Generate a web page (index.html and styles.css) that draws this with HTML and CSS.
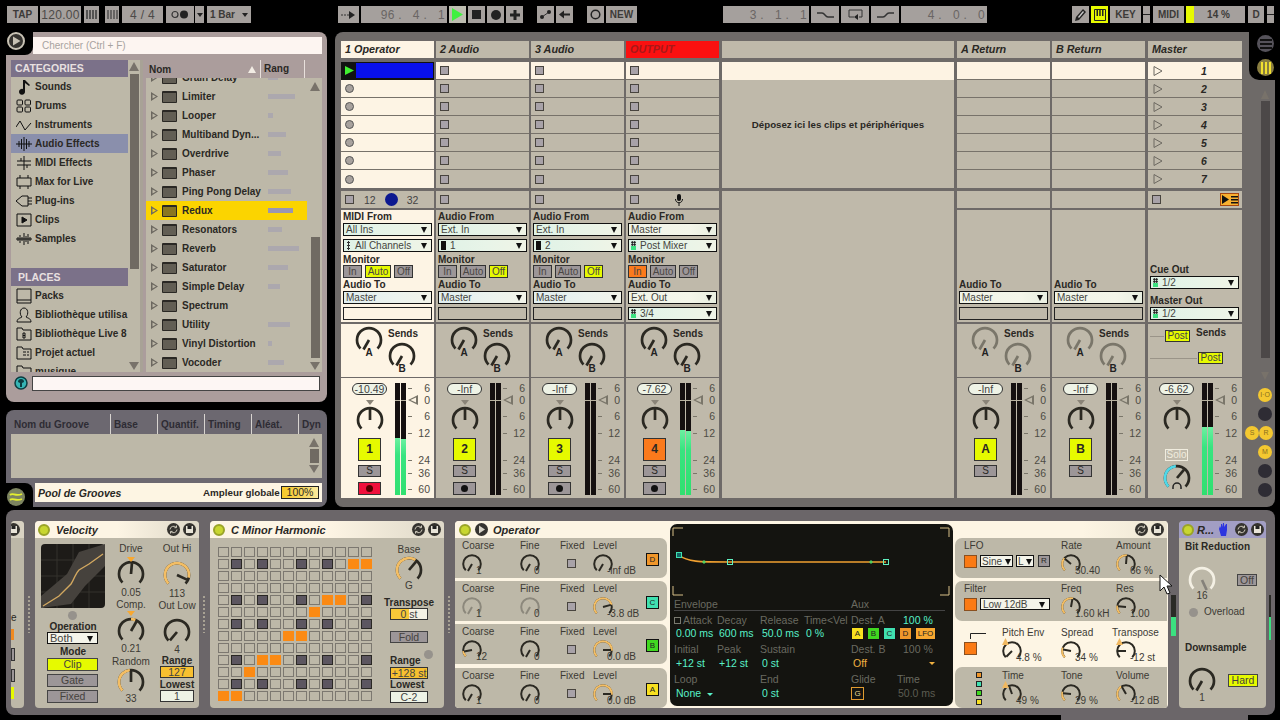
FILE: index.html
```html
<!DOCTYPE html>
<html lang="fr">
<head>
    <meta charset="UTF-8">
    <title>Live 8</title>
    <link rel="stylesheet" href="styles.css">
</head>
<body>
<svg class="defs" width="0" height="0">
    <defs>
        <path id="ring" pathLength="100" fill="none" stroke-width="2.7" d="M6.5 23.5A12 12 0 1 1 23.5 23.5"/>
        <line id="nd" x1="15" y1="15" x2="15" y2="4" stroke-width="2.7"/>
        <g id="swap" fill="none" stroke="#cfcabc" stroke-width="1"><path d="M3 6.5a3.5 3.5 0 0 1 6-2.2M10 6.5a3.5 3.5 0 0 1-6 2.2"/><path d="M9.5 2.5v2.2H7.4M3.5 10.5V8.4h2.1"/></g>
        <g id="save"><path fill="#e8e4d8" d="M3 3h7v7H3z"/><path fill="#222" d="M4.5 3h4v3h-4z"/></g>
    </defs>
</svg>

<div class="top">
    <div class="tb w31">TAP</div>
    <div class="tb w41 big">120.00</div>
    <div class="tb w15 m1"><svg width="11" height="9"><path stroke="#333" stroke-width="1.4" d="M1 0v9M4 0v9M7 0v9M10 0v9"/></svg></div>
    <div class="tb w14 m4"><svg width="11" height="9"><path stroke="#333" stroke-width="1.1" d="M1 0v9M4 0v9M7 0v9M10 0v9"/></svg></div>
    <div class="tb w41 m1 big">4 / 4</div>
    <div class="tb w28 m1"><svg width="18" height="9"><circle cx="4" cy="4.5" r="3" fill="none" stroke="#333" stroke-width="1.2"/><circle cx="13" cy="4.5" r="4" fill="#222"/></svg></div>
    <div class="tb w9 mn1"><i class="dn"></i></div>
    <div class="tb w44 m1">1 Bar <i class="dn sp"></i></div>

    <div class="tb w21 m85"><svg width="15" height="8"><path stroke="#333" stroke-dasharray="2 1" d="M0 4h8"/><path fill="#222" d="M8 0l6 4-6 4z"/></svg></div>
    <div class="tb w86 big dim pos">96 .&nbsp;&nbsp;&nbsp;4 .&nbsp;&nbsp;&nbsp;1</div>
    <div class="tb w17 play"><svg width="11" height="13"><path fill="#40f040" d="M0 0l11 6.500-11 6.500z"/></svg></div>
    <div class="tb w17"><svg width="9" height="9"><path fill="#222" d="M0 0h9v9H0z"/></svg></div>
    <div class="tb w17"><svg width="10" height="10"><circle cx="5" cy="5" r="5" fill="#222"/></svg></div>
    <div class="tb w17"><svg width="10" height="10"><path fill="#222" d="M3.500 0h3v3.500H10v3H6.500V10h-3V6.500H0v-3h3.500z"/></svg></div>
    <div class="tb w17 m12"><svg width="11" height="9"><path stroke="#333" d="M2 7l7-5"/><circle cx="2" cy="7" r="2" fill="#222"/><circle cx="9" cy="2" r="2" fill="#222"/></svg></div>
    <div class="tb w17"><svg width="11" height="9"><path fill="#222" d="M0 4.500l5-4v3h6v2H5v3z"/></svg></div>
    <div class="tb w17 m12"><svg width="11" height="11"><circle cx="5.500" cy="5.500" r="4.300" fill="none" stroke="#222" stroke-width="1.500"/></svg></div>
    <div class="tb w31">NEW</div>

    <div class="tb w86 big dim m84 pos">3 .&nbsp;&nbsp;&nbsp;1 .&nbsp;&nbsp;&nbsp;1</div>
    <div class="tb w28"><svg width="17" height="8"><path fill="none" stroke="#333" stroke-width="1.400" d="M0 2h5c3 0 3 4 6 4h6"/></svg></div>
    <div class="tb w28"><svg width="15" height="12"><path fill="none" stroke="#333" d="M11 8h3V1H1v7h5"/><path fill="#222" d="M10 5v6l-4-3z"/></svg></div>
    <div class="tb w28"><svg width="17" height="8"><path fill="none" stroke="#333" stroke-width="1.400" d="M0 6h6c3 0 3-4 6-4h5"/></svg></div>
    <div class="tb w86 big dim pos">4 .&nbsp;&nbsp;&nbsp;0 .&nbsp;&nbsp;&nbsp;0</div>

    <div class="tb w17 m83"><svg width="11" height="12"><path fill="#222" d="M8 0l3 3-7 8-4 1 1-4z"/><path fill="#ccc" d="M8 2l1 1-5 6-1-1z"/></svg></div>
    <div class="tb w17 lit"><svg width="12" height="12"><path fill="none" stroke="#222" d="M.5.5h11v11H.5z"/><path fill="#222" d="M2.500 0h1.500v7H2.500zM5.200 0h1.500v7H5.200zM8 0h1.500v7H8z"/></svg></div>
    <div class="tb w31">KEY</div>
    <div class="tb w7 split"></div>
    <div class="tb w31 m1">MIDI</div>
    <div class="tb w59 cpu m0">14 %</div>
    <div class="tb w16 m1">D</div>
    <div class="tb w7 split m1"></div>
</div>

<div class="mid">
    <div class="left">
        <div class="browser">
            <div class="cut-tl"><svg width="18" height="18"><circle cx="9" cy="9" r="8" fill="#35332f" stroke="#c8c2b4" stroke-width="2"/><path fill="#c8c2b4" d="M6 4.500l7.500 4.500L6 13.500z"/></svg></div>
            <div class="search">Chercher (Ctrl + F)</div>
            <div class="b-body">
                <div class="cats">
                    <div class="cat-h">CATEGORIES</div>
                    <div class="cat"><svg viewBox="0 0 16 16"><path fill="#111" d="M7 1h2l5 5-1 1-4-3v8.500a3 3 0 1 1-2-2.500z"/></svg>Sounds</div>
                    <div class="cat"><svg viewBox="0 0 16 16" class="ln"><rect x="1" y="2" width="5.500" height="5" rx="1"/><rect x="9" y="2" width="5.500" height="5" rx="1"/><rect x="1" y="9" width="5.500" height="5" rx="1"/><rect x="9" y="9" width="5.500" height="5" rx="1"/></svg>Drums</div>
                    <div class="cat"><svg viewBox="0 0 16 16" class="ln"><path d="M0 10L4 4l5 9 6-7"/></svg>Instruments</div>
                    <div class="cat on"><svg viewBox="0 0 16 16" class="ln"><path d="M0 8h16M3 5v6M5.500 3v10M8 1v14M10.500 3v10M13 5v6"/></svg>Audio Effects</div>
                    <div class="cat"><svg viewBox="0 0 16 16" class="ln"><path d="M1 6h14M1 10h14M8 1v14M5 3v3M11 10v3"/></svg>MIDI Effects</div>
                    <div class="cat"><svg viewBox="0 0 16 16" class="ln"><path d="M1 4h14v8H1zM4 1v3M12 1v3M4 12v3M12 12v3"/></svg>Max for Live</div>
                    <div class="cat"><svg viewBox="0 0 16 16" class="ln"><path d="M0 8l6-5h6v10H6zM12 5h4M12 8h4M12 11h4"/></svg>Plug-ins</div>
                    <div class="cat"><svg viewBox="0 0 16 16" class="ln"><path d="M1 2h14v12H1z"/><path fill="#111" d="M6 5l5 3-5 3z"/></svg>Clips</div>
                    <div class="cat"><svg viewBox="0 0 16 16" class="ln"><path d="M0 8h16M2 6v4M4 4v8M6 6v4M8 2v12M10 5v6M12 3v10M14 6v4"/></svg>Samples</div>
                    <div class="cat-h places">PLACES</div>
                    <div class="cat"><svg viewBox="0 0 16 16" class="ln"><path d="M1 1h14v14H1zM1 12h14"/></svg>Packs</div>
                    <div class="cat"><svg viewBox="0 0 16 16" class="ln"><path d="M1 15c0-4 4-4 5-5-3-3-2-9 2-9s5 6 2 9c1 1 5 1 5 5z"/></svg>Bibliothèque utilisa</div>
                    <div class="cat"><svg viewBox="0 0 16 16" class="ln"><path d="M1 14V2h5l1 2h8v10z"/><path d="M7 7h2v5H7zM7 9.500h2"/></svg>Bibliothèque Live 8</div>
                    <div class="cat"><svg viewBox="0 0 16 16" class="ln"><path d="M1 14V2h5l1 2h8v10zM7 7h3M11 7h2M7 10h3M11 10h2"/></svg>Projet actuel</div>
                    <div class="cat"><svg viewBox="0 0 16 16" class="ln"><path d="M1 14V2h5l1 2h8v10z"/></svg>musique</div>
                </div>
                <div class="c-scroll">
                    <i class="t-up"></i>
                    <i class="thumb c-thumb"></i>
                    <i class="t-dn c-dn"></i>
                </div>
                <div class="files">
                    <div class="f-head"><span class="f-nom">Nom</span><i class="f-sort"></i><span class="f-rang">Rang</span></div>
                    <div class="f-list">
                        <div class="rows">
                            <div class="row"><i class="ftri"></i><i class="folder"></i><span class="fname">Grain Delay</span><i class="rank" style="width:10px"></i></div>
                            <div class="row"><i class="ftri"></i><i class="folder"></i><span class="fname">Limiter</span><i class="rank" style="width:27px"></i></div>
                            <div class="row"><i class="ftri"></i><i class="folder"></i><span class="fname">Looper</span><i class="rank" style="width:5px"></i></div>
                            <div class="row"><i class="ftri"></i><i class="folder"></i><span class="fname">Multiband Dyn...</span><i class="rank" style="width:18px"></i></div>
                            <div class="row"><i class="ftri"></i><i class="folder"></i><span class="fname">Overdrive</span><i class="rank" style="width:13px"></i></div>
                            <div class="row"><i class="ftri"></i><i class="folder"></i><span class="fname">Phaser</span><i class="rank" style="width:20px"></i></div>
                            <div class="row"><i class="ftri"></i><i class="folder"></i><span class="fname">Ping Pong Delay</span><i class="rank" style="width:23px"></i></div>
                            <div class="row hot"><i class="ftri"></i><i class="folder"></i><span class="fname">Redux</span><i class="rank" style="width:25px"></i></div>
                            <div class="row"><i class="ftri"></i><i class="folder"></i><span class="fname">Resonators</span><i class="rank" style="width:14px"></i></div>
                            <div class="row"><i class="ftri"></i><i class="folder"></i><span class="fname">Reverb</span><i class="rank" style="width:31px"></i></div>
                            <div class="row"><i class="ftri"></i><i class="folder"></i><span class="fname">Saturator</span><i class="rank" style="width:20px"></i></div>
                            <div class="row"><i class="ftri"></i><i class="folder"></i><span class="fname">Simple Delay</span><i class="rank" style="width:12px"></i></div>
                            <div class="row"><i class="ftri"></i><i class="folder"></i><span class="fname">Spectrum</span></div>
                            <div class="row"><i class="ftri"></i><i class="folder"></i><span class="fname">Utility</span><i class="rank" style="width:22px"></i></div>
                            <div class="row"><i class="ftri"></i><i class="folder"></i><span class="fname">Vinyl Distortion</span><i class="rank" style="width:4px"></i></div>
                            <div class="row"><i class="ftri"></i><i class="folder"></i><span class="fname">Vocoder</span><i class="rank" style="width:16px"></i></div>
                        </div>
                        <div class="f-scroll">
                            <i class="t-up"></i>
                            <i class="thumb f-thumb"></i>
                            <i class="t-dn"></i>
                        </div>
                    </div>
                </div>
            </div>
            <div class="b-foot">
                <svg width="14" height="14"><circle cx="7" cy="7" r="6" fill="#35b5b5" stroke="#0c3c40" stroke-width="1.500"/><path fill="#0c3c40" d="M4 6a3 3 0 0 1 6 0L8 7v4H6V7z"/></svg>
                <div class="b-input"></div>
            </div>
        </div>

        <div class="groove">
            <div class="g-head">
                <span class="g-first">Nom du Groove</span><span>Base</span><span>Quantif.</span><span>Timing</span><span>Aléat.</span><span>Dyn</span>
            </div>
            <div class="g-list">
                <i class="t-up"></i>
                <i class="thumb g-thumb"></i>
                <i class="t-dn"></i>
            </div>
            <div class="g-title">
                <b class="g-name">Pool de Grooves</b>
                <b class="g-amp">Ampleur globale</b>
                <span class="g-pct">100%</span>
            </div>
            <div class="cut-bl"><svg width="18" height="18"><circle cx="9" cy="9" r="9" fill="#7d8460"/><path fill="none" stroke="#e4ee30" stroke-width="1.800" d="M3 7c3-3 5 2 12-1M3 12c3-3 5 2 12-1"/></svg></div>
        </div>
    </div>

    <div class="session">
        <div class="track sel">
            <div class="t-title">1 Operator</div>
            <div class="slots">
                <div class="slot clip"><i class="clip-play"><svg width="9" height="9"><path fill="#40f030" d="M0 0l9 4.500-9 4.500z"/></svg></i><i class="clip-blue"></i></div>
                <div class="slot"><i class="rec-o"></i></div>
                <div class="slot"><i class="rec-o"></i></div>
                <div class="slot"><i class="rec-o"></i></div>
                <div class="slot"><i class="rec-o"></i></div>
                <div class="slot"><i class="rec-o"></i></div>
                <div class="slot"><i class="rec-o"></i></div>
            </div>
            <div class="st gry"><i class="stop"></i><span class="st-a">12</span><i class="st-dot"></i><span class="st-b">32</span></div>
            <div class="io">
                <b class="lb">MIDI From</b>
                <div class="dd mint">All Ins</div>
                <div class="dd mint gap"><i class="ch ch-dots"></i>All Channels</div>
                <b class="lb lb-m">Monitor</b>
                <div class="mon"><span class="mb">In</span><span class="mb yes">Auto</span><span class="mb">Off</span></div>
                <b class="lb">Audio To</b>
                <div class="dd blue">Master</div>
                <div class="blank"></div>
            </div>
            <div class="sends">
                <svg class="ksend" viewBox="0 0 30 34"><use href="#ring"/><use href="#nd" transform="rotate(-150 15 15)"/><text x="15" y="31">A</text></svg>
                <div class="send-b"><b class="s-lb">Sends</b><svg class="ksend" viewBox="0 0 30 34"><use href="#ring"/><use href="#nd" transform="rotate(-150 15 15)"/><text x="15" y="31">B</text></svg></div>
            </div>
            <div class="mix">
                <div class="strip">
                    <span class="pill">-10.49</span><i class="pan-t"></i>
                    <svg class="k" viewBox="0 0 30 27"><use href="#ring"/><use href="#nd"/></svg>
                    <span class="tnum">1</span><span class="tsolo">S</span><span class="tarm hot"><i></i></span>
                </div>
                <div class="meter"><i><u style="height:57px"></u></i><i><u style="height:56px"></u></i></div>
                <div class="scale"><span>6</span><span class="zero">0</span><span>6</span><span>12</span><span>24</span><span>36</span><span>60</span></div>
            </div>
        </div>

        <div class="track">
            <div class="t-title">2 Audio</div>
            <div class="slots">
                <div class="slot cr"><i class="stop"></i></div>
                <div class="slot"><i class="stop"></i></div>
                <div class="slot"><i class="stop"></i></div>
                <div class="slot"><i class="stop"></i></div>
                <div class="slot"><i class="stop"></i></div>
                <div class="slot"><i class="stop"></i></div>
                <div class="slot"><i class="stop"></i></div>
            </div>
            <div class="st"><i class="stop"></i></div>
            <div class="io">
                <b class="lb">Audio From</b>
                <div class="dd mint">Ext. In</div>
                <div class="dd mint gap"><i class="ch ch-bar"></i>1</div>
                <b class="lb lb-m">Monitor</b>
                <div class="mon"><span class="mb">In</span><span class="mb">Auto</span><span class="mb yes">Off</span></div>
                <b class="lb">Audio To</b>
                <div class="dd blue">Master</div>
                <div class="blank"></div>
            </div>
            <div class="sends">
                <svg class="ksend" viewBox="0 0 30 34"><use href="#ring"/><use href="#nd" transform="rotate(-150 15 15)"/><text x="15" y="31">A</text></svg>
                <div class="send-b"><b class="s-lb">Sends</b><svg class="ksend" viewBox="0 0 30 34"><use href="#ring"/><use href="#nd" transform="rotate(-150 15 15)"/><text x="15" y="31">B</text></svg></div>
            </div>
            <div class="mix">
                <div class="strip">
                    <span class="pill">-Inf</span><i class="pan-t"></i>
                    <svg class="k" viewBox="0 0 30 27"><use href="#ring"/><use href="#nd"/></svg>
                    <span class="tnum">2</span><span class="tsolo">S</span><span class="tarm"><i></i></span>
                </div>
                <div class="meter"><i></i><i></i></div>
                <div class="scale"><span>6</span><span class="zero">0</span><span>6</span><span>12</span><span>24</span><span>36</span><span>60</span></div>
            </div>
        </div>

        <div class="track">
            <div class="t-title">3 Audio</div>
            <div class="slots">
                <div class="slot cr"><i class="stop"></i></div>
                <div class="slot"><i class="stop"></i></div>
                <div class="slot"><i class="stop"></i></div>
                <div class="slot"><i class="stop"></i></div>
                <div class="slot"><i class="stop"></i></div>
                <div class="slot"><i class="stop"></i></div>
                <div class="slot"><i class="stop"></i></div>
            </div>
            <div class="st"><i class="stop"></i></div>
            <div class="io">
                <b class="lb">Audio From</b>
                <div class="dd mint">Ext. In</div>
                <div class="dd mint gap"><i class="ch ch-bar"></i>2</div>
                <b class="lb lb-m">Monitor</b>
                <div class="mon"><span class="mb">In</span><span class="mb">Auto</span><span class="mb yes">Off</span></div>
                <b class="lb">Audio To</b>
                <div class="dd blue">Master</div>
                <div class="blank"></div>
            </div>
            <div class="sends">
                <svg class="ksend" viewBox="0 0 30 34"><use href="#ring"/><use href="#nd" transform="rotate(-150 15 15)"/><text x="15" y="31">A</text></svg>
                <div class="send-b"><b class="s-lb">Sends</b><svg class="ksend" viewBox="0 0 30 34"><use href="#ring"/><use href="#nd" transform="rotate(-150 15 15)"/><text x="15" y="31">B</text></svg></div>
            </div>
            <div class="mix">
                <div class="strip">
                    <span class="pill">-Inf</span><i class="pan-t"></i>
                    <svg class="k" viewBox="0 0 30 27"><use href="#ring"/><use href="#nd"/></svg>
                    <span class="tnum">3</span><span class="tsolo">S</span><span class="tarm"><i></i></span>
                </div>
                <div class="meter"><i></i><i></i></div>
                <div class="scale"><span>6</span><span class="zero">0</span><span>6</span><span>12</span><span>24</span><span>36</span><span>60</span></div>
            </div>
        </div>

        <div class="track">
            <div class="t-title red">OUTPUT</div>
            <div class="slots">
                <div class="slot cr"><i class="stop"></i></div>
                <div class="slot"><i class="stop"></i></div>
                <div class="slot"><i class="stop"></i></div>
                <div class="slot"><i class="stop"></i></div>
                <div class="slot"><i class="stop"></i></div>
                <div class="slot"><i class="stop"></i></div>
                <div class="slot"><i class="stop"></i></div>
            </div>
            <div class="st"><i class="stop"></i><svg class="mic" width="8" height="12"><rect x="2" y="0" width="4" height="7" rx="2" fill="#111"/><path fill="none" stroke="#111" d="M.5 5c0 5 7 5 7 0M4 9v3"/></svg></div>
            <div class="io">
                <b class="lb">Audio From</b>
                <div class="dd">Master</div>
                <div class="dd mint gap"><i class="ch ch-pts"></i>Post Mixer</div>
                <b class="lb lb-m">Monitor</b>
                <div class="mon"><span class="mb org">In</span><span class="mb">Auto</span><span class="mb">Off</span></div>
                <b class="lb">Audio To</b>
                <div class="dd">Ext. Out</div>
                <div class="dd mint last-dd"><i class="ch ch-pts"></i>3/4</div>
            </div>
            <div class="sends">
                <svg class="ksend" viewBox="0 0 30 34"><use href="#ring"/><use href="#nd" transform="rotate(-150 15 15)"/><text x="15" y="31">A</text></svg>
                <div class="send-b"><b class="s-lb">Sends</b><svg class="ksend" viewBox="0 0 30 34"><use href="#ring"/><use href="#nd" transform="rotate(-150 15 15)"/><text x="15" y="31">B</text></svg></div>
            </div>
            <div class="mix">
                <div class="strip">
                    <span class="pill">-7.62</span><i class="pan-t"></i>
                    <svg class="k" viewBox="0 0 30 27"><use href="#ring"/><use href="#nd"/></svg>
                    <span class="tnum off">4</span><span class="tsolo">S</span><span class="tarm"><i></i></span>
                </div>
                <div class="meter"><i><u style="height:65px"></u></i><i><u style="height:64px"></u></i></div>
                <div class="scale"><span>6</span><span class="zero">0</span><span>6</span><span>12</span><span>24</span><span>36</span><span>60</span></div>
            </div>
        </div>

        <div class="drop">
            <div class="t-title"></div>
            <div class="d-slots"><div class="d-first"></div><b class="d-msg">Déposez ici les clips et périphériques</b></div>
            <div class="d-rest"></div>
        </div>

        <div class="track">
            <div class="t-title">A Return</div>
            <div class="slots">
                <div class="slot cr"></div><div class="slot"></div><div class="slot"></div><div class="slot"></div><div class="slot"></div><div class="slot"></div><div class="slot"></div>
            </div>
            <div class="st"></div>
            <div class="io end">
                <b class="lb">Audio To</b>
                <div class="dd">Master</div>
                <div class="blank"></div>
            </div>
            <div class="sends gr">
                <svg class="ksend" viewBox="0 0 30 34"><use href="#ring"/><use href="#nd" transform="rotate(-150 15 15)"/><text x="15" y="31">A</text></svg>
                <div class="send-b"><b class="s-lb">Sends</b><svg class="ksend" viewBox="0 0 30 34"><use href="#ring"/><use href="#nd" transform="rotate(-150 15 15)"/><text x="15" y="31">B</text></svg></div>
            </div>
            <div class="mix">
                <div class="strip">
                    <span class="pill">-Inf</span><i class="pan-t"></i>
                    <svg class="k" viewBox="0 0 30 27"><use href="#ring"/><use href="#nd"/></svg>
                    <span class="tnum">A</span><span class="tsolo">S</span>
                </div>
                <div class="meter"><i></i><i></i></div>
                <div class="scale"><span>6</span><span class="zero">0</span><span>6</span><span>12</span><span>24</span><span>36</span><span>60</span></div>
            </div>
        </div>

        <div class="track">
            <div class="t-title">B Return</div>
            <div class="slots">
                <div class="slot cr"></div><div class="slot"></div><div class="slot"></div><div class="slot"></div><div class="slot"></div><div class="slot"></div><div class="slot"></div>
            </div>
            <div class="st"></div>
            <div class="io end">
                <b class="lb">Audio To</b>
                <div class="dd">Master</div>
                <div class="blank"></div>
            </div>
            <div class="sends gr">
                <svg class="ksend" viewBox="0 0 30 34"><use href="#ring"/><use href="#nd" transform="rotate(-150 15 15)"/><text x="15" y="31">A</text></svg>
                <div class="send-b"><b class="s-lb">Sends</b><svg class="ksend" viewBox="0 0 30 34"><use href="#ring"/><use href="#nd" transform="rotate(-150 15 15)"/><text x="15" y="31">B</text></svg></div>
            </div>
            <div class="mix">
                <div class="strip">
                    <span class="pill">-Inf</span><i class="pan-t"></i>
                    <svg class="k" viewBox="0 0 30 27"><use href="#ring"/><use href="#nd"/></svg>
                    <span class="tnum">B</span><span class="tsolo">S</span>
                </div>
                <div class="meter"><i></i><i></i></div>
                <div class="scale"><span>6</span><span class="zero">0</span><span>6</span><span>12</span><span>24</span><span>36</span><span>60</span></div>
            </div>
        </div>

        <div class="track master">
            <div class="t-title">Master</div>
            <div class="slots">
                <div class="slot cr scene"><svg width="10" height="10"><path fill="none" stroke="#6c6860" d="M1 .5l8 4.500-8 4.500z"/></svg><b>1</b></div>
                <div class="slot scene"><svg width="10" height="10"><path fill="none" stroke="#6c6860" d="M1 .5l8 4.500-8 4.500z"/></svg><b>2</b></div>
                <div class="slot scene"><svg width="10" height="10"><path fill="none" stroke="#6c6860" d="M1 .5l8 4.500-8 4.500z"/></svg><b>3</b></div>
                <div class="slot scene"><svg width="10" height="10"><path fill="none" stroke="#6c6860" d="M1 .5l8 4.500-8 4.500z"/></svg><b>4</b></div>
                <div class="slot scene"><svg width="10" height="10"><path fill="none" stroke="#6c6860" d="M1 .5l8 4.500-8 4.500z"/></svg><b>5</b></div>
                <div class="slot scene"><svg width="10" height="10"><path fill="none" stroke="#6c6860" d="M1 .5l8 4.500-8 4.500z"/></svg><b>6</b></div>
                <div class="slot scene"><svg width="10" height="10"><path fill="none" stroke="#6c6860" d="M1 .5l8 4.500-8 4.500z"/></svg><b>7</b></div>
            </div>
            <div class="st"><i class="stop"></i><span class="m-btn"><svg width="16" height="9"><path fill="#111" d="M0 0l7 4.500-7 4.500zM9 1h7v1.500H9zM9 4h7v1.500H9zM9 7h7v1.500H9z"/></svg></span></div>
            <div class="io end">
                <b class="lb">Cue Out</b>
                <div class="dd mint"><i class="ch ch-pts"></i>1/2</div>
                <b class="lb lb-o">Master Out</b>
                <div class="dd mint"><i class="ch ch-pts"></i>1/2</div>
            </div>
            <div class="sends m-sends">
                <div class="post-a"><i></i><span class="post">Post</span><b class="s-lb">Sends</b></div>
                <div class="post-b"><i></i><span class="post">Post</span></div>
            </div>
            <div class="mix">
                <div class="strip">
                    <span class="pill">-6.62</span><i class="pan-t"></i>
                    <svg class="k" viewBox="0 0 30 27"><use href="#ring"/><use href="#nd"/></svg>
                    <span class="solo">Solo</span>
                    <svg class="k cue" viewBox="0 0 30 27"><use href="#ring"/><use href="#ring" class="cy" stroke-dasharray="48 100"/><use href="#nd" transform="rotate(40 15 15)"/><path class="ph" d="M11 26v-2a4 4 0 0 1 8 0v2"/></svg>
                </div>
                <div class="meter"><i><u style="height:68px"></u></i><i><u style="height:68px"></u></i></div>
                <div class="scale"><span>6</span><span class="zero">0</span><span>6</span><span>12</span><span>24</span><span>36</span><span>60</span></div>
            </div>
        </div>

        <div class="side">
            <i class="t-up"></i>
            <i class="side-bar"></i>
            <i class="t-dn side-dn"></i>
            <span class="rd yl">I·O</span>
            <span class="rd dk"></span>
            <div class="sr"><span class="rd yl">S</span><span class="rd yl">R</span></div>
            <span class="rd yl">M</span>
            <span class="rd dk"></span>
            <span class="rd dk"></span>
        </div>
        <div class="cut-tr">
            <span class="tab"><svg width="12" height="10"><path stroke="#111" stroke-width="2" d="M0 1h12M0 5h12M0 9h12"/></svg></span>
            <span class="tab tab-y"><svg width="10" height="12"><path stroke="#f2e030" stroke-width="2" d="M1 0v12M5 0v12M9 0v12"/></svg></span>
        </div>
    </div>
</div>

<div class="devices">
    <div class="dev stub">
        <div class="d-head"><span class="ico"><svg width="13" height="13"><use href="#save"/></svg></span></div>
        <div class="stub-b"><span>e</span><i class="sb-o"></i><i class="sb-g"></i><i class="sb-g"></i><i class="sb-y"></i></div>
    </div>
    <div class="dots"></div>

    <div class="dev vel">
        <div class="d-head fade"><i class="pw"></i><b class="d-name">Velocity</b><span class="ico push"><svg width="13" height="13"><use href="#swap"/></svg></span><span class="ico"><svg width="13" height="13"><use href="#save"/></svg></span></div>
        <div class="vel-b">
            <div class="v1">
                <svg class="graph" width="64" height="64" viewBox="0 0 64 64">
                    <rect width="64" height="64" rx="4" fill="#1d1b18"/>
                    <path stroke="#35322c" d="M0 16h64M0 32h64M0 48h64M16 0v64M32 0v64M48 0v64"/>
                    <path fill="#46423d" d="M0 52L26 30 38 8 64 0v22L44 42 30 60 0 64z"/>
                    <path fill="none" stroke="#d2a860" stroke-width="1.400" d="M2 62l16-10 12-12c4-6 4-10 8-14l10-6 14-10"/>
                </svg>
                <i class="gdot"></i>
                <b class="lb2">Operation</b>
                <div class="dd plain v-dd">Both</div>
                <b class="lb2 lb-mode">Mode</b>
                <span class="mode lit">Clip</span>
                <span class="mode">Gate</span>
                <span class="mode">Fixed</span>
            </div>
            <div class="v2">
                <span class="tx l1">Drive</span><i class="otri"></i>
                <svg class="k" viewBox="0 0 30 27"><use href="#ring"/><use href="#nd" transform="rotate(5 15 15)"/></svg>
                <span class="tx l2">0.05</span>
                <span class="tx l3">Comp.</span><i class="otri o2"></i>
                <svg class="k" viewBox="0 0 30 27"><use href="#ring"/><use href="#ring" class="ar" stroke-dasharray="0 50 8 100"/><use href="#nd" transform="rotate(30 15 15)"/></svg>
                <span class="tx l4">0.21</span>
                <span class="tx l5">Random</span>
                <svg class="k k-up" viewBox="0 0 30 27"><use href="#ring"/><use href="#ring" class="ar" stroke-dasharray="48 100"/><use href="#nd" transform="rotate(0 15 15)"/></svg>
                <span class="tx l6">33</span>
            </div>
            <div class="v3">
                <span class="tx l1">Out Hi</span>
                <svg class="k k-t" viewBox="0 0 30 27"><use href="#ring"/><use href="#ring" class="ar" stroke-dasharray="88 100"/><use href="#nd" transform="rotate(115 15 15)"/></svg>
                <span class="tx l2">113</span>
                <span class="tx l3">Out Low</span>
                <svg class="k k-t2" viewBox="0 0 30 27"><use href="#ring"/><use href="#nd" transform="rotate(-140 15 15)"/></svg>
                <span class="tx l4">4</span>
                <b class="lb3 r1">Range</b>
                <span class="box org-box">127</span>
                <b class="lb3 r2">Lowest</b>
                <span class="box r3">1</span>
            </div>
        </div>
    </div>
    <div class="dots"></div>

    <div class="dev minor">
        <div class="d-head fade"><i class="pw"></i><b class="d-name">C Minor Harmonic</b><span class="ico push"><svg width="13" height="13"><use href="#swap"/></svg></span><span class="ico"><svg width="13" height="13"><use href="#save"/></svg></span></div>
        <div class="min-b">
            <div class="matrix">
                <i></i><i></i><i></i><i></i><i></i><i></i><i></i><i></i><i></i><i></i><i></i><i></i>
                <i></i><i class="d"></i><i></i><i class="d"></i><i></i><i></i><i class="d"></i><i></i><i class="d"></i><i></i><i class="o"></i><i class="o"></i>
                <i></i><i></i><i></i><i></i><i></i><i></i><i></i><i></i><i></i><i></i><i></i><i></i>
                <i></i><i></i><i></i><i></i><i></i><i></i><i></i><i></i><i></i><i></i><i></i><i></i>
                <i></i><i class="d"></i><i></i><i class="d"></i><i></i><i></i><i class="d"></i><i></i><i class="o"></i><i class="o"></i><i></i><i class="d"></i>
                <i></i><i></i><i></i><i></i><i></i><i></i><i></i><i class="o"></i><i></i><i></i><i></i><i></i>
                <i></i><i class="d"></i><i></i><i class="d"></i><i></i><i></i><i class="d"></i><i></i><i class="d"></i><i></i><i></i><i class="d"></i>
                <i></i><i></i><i></i><i></i><i></i><i class="o"></i><i class="o"></i><i></i><i></i><i></i><i></i><i></i>
                <i></i><i></i><i></i><i></i><i></i><i></i><i></i><i></i><i></i><i></i><i></i><i></i>
                <i></i><i class="d"></i><i></i><i class="o"></i><i class="o"></i><i></i><i class="d"></i><i></i><i class="d"></i><i></i><i></i><i class="d"></i>
                <i></i><i></i><i class="o"></i><i></i><i></i><i></i><i></i><i></i><i></i><i></i><i></i><i></i>
                <i></i><i class="d"></i><i></i><i class="d"></i><i></i><i></i><i class="d"></i><i></i><i class="d"></i><i></i><i></i><i class="d"></i>
                <i class="o"></i><i class="o"></i><i></i><i></i><i></i><i></i><i></i><i></i><i></i><i></i><i></i><i></i>
            </div>
            <div class="m-right">
                <span class="tx mr1">Base</span>
                <svg class="k mr2" viewBox="0 0 30 27"><use href="#ring"/><use href="#ring" class="ar" stroke-dasharray="62 100"/><use href="#nd" transform="rotate(40 15 15)"/></svg>
                <span class="tx mr3">G</span>
                <b class="lb3 mr4">Transpose</b>
                <span class="box half">0 st</span>
                <span class="mode fold">Fold</span>
                <i class="gdot mr5"></i>
                <b class="lb3 mr6">Range</b>
                <span class="box org-box">+128 st</span>
                <b class="lb3 mr7">Lowest</b>
                <span class="box">C-2</span>
            </div>
        </div>
    </div>
    <div class="dots"></div>

    <div class="dev op">
        <div class="op-l">
            <div class="d-head oph"><i class="pw"></i><span class="ico ply"><svg width="13" height="13"><path fill="#d8d4c8" d="M4 2.500l6 4-6 4z"/></svg></span><b class="d-name">Operator</b></div>
            <div class="o-row">
                <div class="o-c"><span class="tx">Coarse</span><div class="okn"><svg class="ks" viewBox="0 0 30 30"><use href="#ring"/><use href="#nd" transform="rotate(-150 15 15)"/></svg><span class="ov">1</span></div></div>
                <div class="o-c"><span class="tx">Fine</span><div class="okn"><svg class="ks" viewBox="0 0 30 30"><use href="#ring"/><use href="#nd" transform="rotate(-150 15 15)"/></svg><span class="ov">0</span></div></div>
                <div class="o-c"><span class="tx">Fixed</span><i class="stop fx"></i></div>
                <div class="o-c"><span class="tx">Level</span><div class="okn"><svg class="ks" viewBox="0 0 30 30"><use href="#ring"/><use href="#nd" transform="rotate(-150 15 15)"/></svg><span class="ov">-inf dB</span></div></div>
                <span class="op-btn d">D</span>
            </div>
            <div class="o-row">
                <div class="o-c"><span class="tx">Coarse</span><div class="okn"><svg class="ks off" viewBox="0 0 30 30"><use href="#ring"/><use href="#nd" transform="rotate(-150 15 15)"/></svg><span class="ov">1</span></div></div>
                <div class="o-c"><span class="tx">Fine</span><div class="okn"><svg class="ks off" viewBox="0 0 30 30"><use href="#ring"/><use href="#nd" transform="rotate(-150 15 15)"/></svg><span class="ov">0</span></div></div>
                <div class="o-c"><span class="tx">Fixed</span><i class="stop fx"></i></div>
                <div class="o-c"><span class="tx">Level</span><div class="okn"><svg class="ks" viewBox="0 0 30 30"><use href="#ring"/><use href="#ring" class="ar" stroke-dasharray="78 100"/><use href="#nd" transform="rotate(75 15 15)"/></svg><span class="ov">-3.8 dB</span></div></div>
                <span class="op-btn c">C</span>
            </div>
            <div class="o-row">
                <div class="o-c"><span class="tx">Coarse</span><div class="okn"><svg class="ks" viewBox="0 0 30 30"><use href="#ring"/><use href="#ring" class="ar" stroke-dasharray="14 100"/><use href="#nd" transform="rotate(-100 15 15)"/></svg><span class="ov">12</span></div></div>
                <div class="o-c"><span class="tx">Fine</span><div class="okn"><svg class="ks" viewBox="0 0 30 30"><use href="#ring"/><use href="#nd" transform="rotate(-150 15 15)"/></svg><span class="ov">0</span></div></div>
                <div class="o-c"><span class="tx">Fixed</span><i class="stop fx"></i></div>
                <div class="o-c"><span class="tx">Level</span><div class="okn"><svg class="ks" viewBox="0 0 30 30"><use href="#ring"/><use href="#ring" class="ar" stroke-dasharray="85 100"/><use href="#nd" transform="rotate(90 15 15)"/></svg><span class="ov">0.0 dB</span></div></div>
                <span class="op-btn b">B</span>
            </div>
            <div class="o-row last">
                <div class="o-c"><span class="tx">Coarse</span><div class="okn"><svg class="ks" viewBox="0 0 30 30"><use href="#ring"/><use href="#nd" transform="rotate(-150 15 15)"/></svg><span class="ov">1</span></div></div>
                <div class="o-c"><span class="tx">Fine</span><div class="okn"><svg class="ks" viewBox="0 0 30 30"><use href="#ring"/><use href="#nd" transform="rotate(-150 15 15)"/></svg><span class="ov">0</span></div></div>
                <div class="o-c"><span class="tx">Fixed</span><i class="stop fx"></i></div>
                <div class="o-c"><span class="tx">Level</span><div class="okn"><svg class="ks" viewBox="0 0 30 30"><use href="#ring"/><use href="#ring" class="ar" stroke-dasharray="85 100"/><use href="#nd" transform="rotate(90 15 15)"/></svg><span class="ov">0.0 dB</span></div></div>
                <span class="op-btn a">A</span>
            </div>
        </div>

        <div class="op-m">
            <svg class="env" width="283" height="74" viewBox="0 0 283 74">
                <path fill="none" stroke="#d8c088" d="M3 12V4h10M270 4h9v9M3 62v9h10M270 71h9v-9"/>
                <path fill="none" stroke="#f0a030" stroke-width="1.600" d="M9 31c8 7 20 7 51 7h156"/>
                <rect x="6.500" y="28.500" width="5" height="5" fill="#166" stroke="#40e0b0"/>
                <rect x="57.500" y="35.500" width="5" height="5" fill="none" stroke="#60f0c0"/>
                <rect x="213.500" y="35.500" width="5" height="5" fill="none" stroke="#60f0c0"/>
                <path fill="#50d060" d="M34 36l2 2-2 2-2-2zM201 36l2 2-2 2-2-2z"/>
            </svg>
            <div class="op-grid">
                <span class="g-env">Envelope</span><span class="g-aux">Aux</span>
                <span class="atk">Attack</span><span>Decay</span><span>Release</span><span>Time&lt;Vel</span><span>Dest. A</span><span class="v vb">100 %</span>
                <span class="v">0.00 ms</span><span class="v">600 ms</span><span class="v">50.0 ms</span><span class="v">0 %</span>
                <div class="dest"><i class="op-btn a">A</i><i class="op-btn b">B</i><i class="op-btn c">C</i><i class="op-btn d">D</i><i class="op-btn lfo">LFO</i></div>
                <span>Initial</span><span>Peak</span><span>Sustain</span><i></i><span>Dest. B</span><span class="pct2">100 %</span>
                <span class="v">+12 st</span><span class="v">+12 st</span><span class="v">0 st</span><i></i>
                <span class="v off-row">Off<i class="mini-dn o"></i></span>
                <span>Loop</span><i></i><span>End</span><i></i><span>Glide</span><span>Time</span>
                <span class="v">None<i class="mini-dn"></i></span><i></i><span class="v">0 st</span><i></i>
                <i class="op-btn gl">G</i><span class="dim-v">50.0 ms</span>
            </div>
        </div>

        <div class="op-r">
            <div class="d-head oph2"><span class="ico"><svg width="13" height="13"><use href="#swap"/></svg></span><span class="ico"><svg width="13" height="13"><use href="#save"/></svg></span></div>
            <div class="r-row">
                <div class="r1c"><span class="tx">LFO</span><div class="ctl"><i class="sq"></i><div class="dd plain sine">Sine</div><div class="dd plain ell">L</div><span class="mini">R</span></div></div>
                <div class="r2c"><span class="tx">Rate</span><div class="okn"><svg class="ks" viewBox="0 0 30 30"><use href="#ring"/><use href="#ring" class="ar" stroke-dasharray="32 100"/><use href="#nd" transform="rotate(-50 15 15)"/></svg><span class="ov">50.40</span></div></div>
                <div class="r3c"><span class="tx">Amount</span><div class="okn"><svg class="ks" viewBox="0 0 30 30"><use href="#ring"/><use href="#ring" class="ar" stroke-dasharray="52 100"/><use href="#nd" transform="rotate(5 15 15)"/></svg><span class="ov">66 %</span></div></div>
            </div>
            <div class="r-row">
                <div class="r1c"><span class="tx">Filter</span><div class="ctl"><i class="sq"></i><div class="dd plain lowp">Low 12dB</div></div></div>
                <div class="r2c"><span class="tx">Freq</span><div class="okn"><svg class="ks" viewBox="0 0 30 30"><use href="#ring"/><use href="#ring" class="ar" stroke-dasharray="55 100"/><use href="#nd" transform="rotate(10 15 15)"/></svg><span class="ov">1.60 kH</span></div></div>
                <div class="r3c"><span class="tx">Res</span><div class="okn"><svg class="ks" viewBox="0 0 30 30"><use href="#ring"/><use href="#ring" class="ar" stroke-dasharray="20 100"/><use href="#nd" transform="rotate(-85 15 15)"/></svg><span class="ov">1.00</span></div></div>
            </div>
            <div class="r-row cream">
                <div class="r0c"><svg class="env-ic" width="16" height="6"><path fill="none" stroke="#222" d="M.5 6V.5H16"/></svg><i class="sq sq2"></i></div>
                <div class="r4c"><span class="tx">Pitch Env</span><div class="okn"><i class="otri2"></i><svg class="ks" viewBox="0 0 30 30"><use href="#ring"/><use href="#nd" transform="rotate(-135 15 15)"/></svg><span class="ov">4.8 %</span></div></div>
                <div class="r2c"><span class="tx">Spread</span><div class="okn"><svg class="ks" viewBox="0 0 30 30"><use href="#ring"/><use href="#ring" class="ar" stroke-dasharray="25 100"/><use href="#nd" transform="rotate(-80 15 15)"/></svg><span class="ov">34 %</span></div></div>
                <div class="r3c tr"><span class="tx">Transpose</span><div class="okn"><i class="otri2"></i><svg class="ks" viewBox="0 0 30 30"><use href="#ring"/><use href="#nd" transform="rotate(-90 15 15)"/></svg><span class="ov">-12 st</span></div></div>
            </div>
            <div class="r-row bot">
                <div class="r0c"><div class="mini-sq"><i class="d"></i><i class="c"></i><i class="b"></i><i class="a"></i></div></div>
                <div class="r4c"><span class="tx">Time</span><div class="okn"><i class="otri2"></i><svg class="ks" viewBox="0 0 30 30"><use href="#ring"/><use href="#nd" transform="rotate(-20 15 15)"/></svg><span class="ov">49 %</span></div></div>
                <div class="r2c"><span class="tx">Tone</span><div class="okn"><svg class="ks" viewBox="0 0 30 30"><use href="#ring"/><use href="#ring" class="ar" stroke-dasharray="22 100"/><use href="#nd" transform="rotate(-85 15 15)"/></svg><span class="ov">29 %</span></div></div>
                <div class="r3c"><span class="tx">Volume</span><div class="okn"><svg class="ks" viewBox="0 0 30 30"><use href="#ring"/><use href="#ring" class="ar" stroke-dasharray="38 100"/><use href="#nd" transform="rotate(-30 15 15)"/></svg><span class="ov">-12 dB</span></div></div>
            </div>
        </div>
    </div>
    <div class="vm"><i></i></div>

    <div class="dev redux">
        <div class="d-head lav"><i class="pw"></i><b class="d-name">R...</b><svg class="hand" width="10" height="13"><path fill="#2c34e0" d="M1 6l1-3 1 2V1l1 0 .5 3L5 0h1l.3 4L8 1h1v6l-1 6H3z"/></svg><span class="ico push"><svg width="13" height="13"><use href="#swap"/></svg></span><span class="ico"><svg width="13" height="13"><use href="#save"/></svg></span></div>
        <div class="rd-b">
            <b class="lb4">Bit Reduction</b>
            <div class="rd-row">
                <svg class="k wt" viewBox="0 0 30 27"><use href="#ring"/><use href="#nd" transform="rotate(155 15 15)"/></svg>
                <span class="mode rd-off">Off</span>
            </div>
            <span class="tx rd-v">16</span>
            <div class="rd-ov"><i class="gdot"></i><span class="tx">Overload</span></div>
            <b class="lb4 rd-down">Downsample</b>
            <div class="rd-row rd2">
                <svg class="k" viewBox="0 0 30 27"><use href="#ring"/><use href="#nd" transform="rotate(-150 15 15)"/></svg>
                <span class="mode lit rd-hard">Hard</span>
            </div>
            <span class="tx rd-v">1</span>
        </div>
    </div>
    <div class="vm vm2"><i></i></div>

    <svg class="cursor" width="14" height="22"><path fill="#fff" stroke="#111" d="M1 1v16l4-4 3 7 3-1-3-7h5z"/></svg>
</div>
<div class="foot"></div>
</body>
</html>
```

FILE: styles.css
```css
* {
    box-sizing: border-box;
    margin: 0;
    padding: 0;
}
html, body {
    width: 1280px;
    height: 720px;
    overflow: hidden;
}
body {
    background: #000;
    color: #2a2824;
    font-family: "Liberation Sans", Arial, sans-serif;
    font-size: 10px;
}
i, u {
    display: block;
    font-style: normal;
    text-decoration: none;
}
.defs {
    position: absolute;
}

/* transport */
.top {
    display: flex;
    gap: 2px;
    height: 32px;
    padding: 6px 0 0 7px;
}
.tb {
    display: flex;
    align-items: center;
    justify-content: center;
    height: 17px;
    background: #a5a09d;
    color: #3c3a38;
    font-weight: bold;
    font-size: 10px;
}
.big { font-size: 12px; font-weight: normal; color: #4c4a48; letter-spacing: .3px; }
.dim { color: #6a6664; }
.pos { justify-content: flex-end; padding-right: 2px; white-space: pre; }
.play { background: #bdbdb0; }
.lit { background: #e6fa00; color: #222; }
.w7 { width: 7px; } .w9 { width: 9px; } .w14 { width: 14px; } .w15 { width: 15px; } .w16 { width: 16px; }
.w17 { width: 17px; } .w21 { width: 21px; } .w28 { width: 28px; } .w31 { width: 31px; } .w41 { width: 41px; }
.w44 { width: 44px; } .w59 { width: 59px; } .w86 { width: 86px; }
.m0 { margin-left: 0; } .mn1 { margin-left: -1px; } .m1 { margin-left: 1px; } .m4 { margin-left: 4px; }
.m12 { margin-left: 12px; } .m83 { margin-left: 83px; } .m84 { margin-left: 84px; } .m85 { margin-left: 85px; }
.dn {
    border-left: 3px solid transparent;
    border-right: 3px solid transparent;
    border-top: 4px solid #222;
}
.dn.sp { margin-left: 7px; }
.split {
    background: linear-gradient(#a5a09d 8px, #222 8px, #222 9px, #a5a09d 9px);
}
.cpu {
    background: linear-gradient(90deg, #e6fa00 8px, #a5a09d 8px);
    padding-left: 6px;
}

.mid {
    display: flex;
    height: 475px;
}

/* browser */
.left {
    display: flex;
    flex-direction: column;
    gap: 8px;
    width: 321px;
    margin: 0 8px 0 6px;
}
.browser {
    position: relative;
    height: 370px;
    padding: 5px;
    background: #ab9d9c;
    border-radius: 8px;
}
.cut-tl {
    position: absolute;
    left: 0;
    top: 0;
    display: flex;
    width: 27px;
    height: 23px;
    padding-left: 1px;
    background: #000;
    border-bottom-right-radius: 8px;
}
.search {
    height: 17px;
    margin-left: 22px;
    padding: 1px 9px;
    background: #fdf5f1;
    color: #a8a3a0;
    font-size: 10px;
    line-height: 15px;
}
.b-body {
    display: flex;
    height: 312px;
    margin-top: 6px;
}
.cats {
    width: 117px;
    height: 312px;
    overflow: hidden;
    background: #bdb8a8;
}
.cat-h {
    height: 17px;
    padding-left: 4px;
    background: #7b7189;
    color: #e8e0e0;
    font-size: 10.500px;
    font-weight: bold;
    line-height: 17px;
}
.places { height: 18px; margin-top: 20px; padding-left: 7px; line-height: 18px; }
.cat {
    display: flex;
    align-items: center;
    height: 19px;
    padding-left: 5px;
    font-weight: bold;
    font-size: 10px;
    white-space: nowrap;
}
.cat svg {
    flex: none;
    width: 16px;
    height: 16px;
    margin-right: 3px;
}
.ln { fill: none; stroke: #111; stroke-width: 1; }
.cat.on { background: #8a8fac; }
.c-scroll {
    display: flex;
    flex-direction: column;
    align-items: center;
    flex: none;
    width: 15px;
    padding: 2px 0 2px 0;
    background: #bdb8a8;
    border-right: 3px solid #a8a296;
}
.thumb { background: #706a62; }
.c-thumb { width: 9px; height: 195px; margin-top: 3px; }
.c-dn { margin-top: 93px; }
.t-up {
    width: 0;
    height: 0;
    border-left: 5px solid transparent;
    border-right: 5px solid transparent;
    border-bottom: 9px solid #78726a;
}
.t-dn {
    width: 0;
    height: 0;
    border-left: 5px solid transparent;
    border-right: 5px solid transparent;
    border-top: 8px solid #78726a;
}
.files {
    width: 176px;
    margin-left: 3px;
}
.f-head {
    display: flex;
    align-items: center;
    height: 18px;
    font-weight: bold;
    font-size: 10px;
}
.f-nom { width: 102px; padding-left: 3px; }
.f-sort {
    width: 0;
    height: 0;
    border-left: 4px solid transparent;
    border-right: 4px solid transparent;
    border-bottom: 7px solid #f2ece4;
}
.f-rang {
    width: 45px;
    height: 18px;
    margin-left: 4px;
    padding-left: 3px;
    border-left: 1px solid #e8e0dc;
    border-right: 1px solid #e8e0dc;
    line-height: 18px;
}
.f-list {
    display: flex;
    height: 294px;
    overflow: hidden;
    background: #bdb8a8;
}
.rows {
    width: 164px;
    padding-right: 3px;
    margin-top: -10px;
}
.row {
    display: flex;
    align-items: center;
    height: 19px;
    padding-left: 5px;
    font-weight: bold;
}
.row.hot { background: #fbd400; }
.ftri {
    width: 7px;
    height: 9px;
    background: #6c6860;
    clip-path: polygon(0 0, 100% 50%, 0 100%, 0 0, 1.5px 2.5px, 1.5px 6.5px, 5px 4.5px, 1.5px 2.5px);
}
.folder {
    width: 15px;
    height: 12px;
    margin-left: 4px;
    background: #625e54;
    border: 1px solid #2a2824;
    border-top-width: 2px;
    border-radius: 1px;
}
.hot .folder { background: #8a7620; }
.fname { flex: none; width: 86px; margin-left: 5px; white-space: nowrap; }
.rank { height: 5px; background: #aca8ae; }
.hot .rank { height: 5px; background: #9a96b0; }
.f-scroll {
    display: flex;
    flex-direction: column;
    align-items: center;
    width: 10px;
    padding-top: 4px;
}
.f-thumb { width: 9px; height: 121px; margin: 146px 0 4px; }
.b-foot {
    display: flex;
    align-items: center;
    gap: 4px;
    height: 18px;
    margin-top: 2px;
    padding-left: 3px;
}
.b-input {
    width: 288px;
    height: 15px;
    background: #fdf6f4;
    border: 1px solid #444;
}

/* groove pool */
.groove {
    position: relative;
    height: 97px;
    padding: 4px 5px 0;
    background: #6c6870;
    border-radius: 8px;
}
.g-head {
    display: flex;
    height: 20px;
    overflow: hidden;
    font-weight: bold;
    color: #2e2c34;
}
.g-head span {
    flex: none;
    width: 47px;
    padding-left: 3px;
    border-left: 1px solid #d8d4d0;
    line-height: 22px;
    white-space: nowrap;
    overflow: hidden;
}
.g-head .g-first { width: 99px; border: 0; }
.g-head span:last-child { width: 24px; }
.g-list {
    display: flex;
    flex-direction: column;
    align-items: flex-end;
    height: 44px;
    padding: 4px 3px 0 0;
    background: #bdb8a8;
}
.g-thumb { width: 9px; height: 14px; margin: 2px 0; }
.g-title {
    display: flex;
    align-items: center;
    height: 19px;
    margin: 5px 0 0 24px;
    padding-left: 3px;
    background: #fdf5e3;
}
.g-name { width: 165px; font-size: 10.500px; font-style: italic; }
.g-amp { width: 77px; font-size: 9.800px; white-space: nowrap; }
.g-pct {
    width: 38px;
    height: 13px;
    margin-left: 1px;
    background: linear-gradient(90deg, #f8c828, #f8d860 60%, #fae9a0);
    border: 1px solid #222;
    text-align: center;
    font-size: 10.500px;
    line-height: 11px;
}
.cut-bl {
    position: absolute;
    left: 0;
    bottom: 0;
    display: flex;
    align-items: flex-end;
    width: 27px;
    height: 24px;
    padding: 0 0 1px 1px;
    background: #000;
    border-top-right-radius: 8px;
}

/* session */
.session {
    position: relative;
    display: flex;
    gap: 2px;
    width: 940px;
    padding: 9px 0 0 6px;
    background: #6e6a68;
    border-radius: 8px;
}
.track { width: 93px; flex: none; }
.master { width: 94px; margin-left: 1px; }
.t-title {
    height: 17px;
    margin-bottom: 4px;
    padding-left: 4px;
    background: #bfb9aa;
    font-size: 10.800px;
    font-weight: bold;
    font-style: italic;
    line-height: 17px;
}
.red { background: #fa1010; color: #a81818; }
.sel .t-title, .sel .slots, .sel .io, .sel .sends, .sel .mix { background: #fdf4e4; }
.slots {
    height: 126px;
    margin-bottom: 3px;
    background: #bfb9aa;
}
.slot {
    display: flex;
    align-items: center;
    height: 18px;
    padding-left: 4px;
    border-bottom: 1px solid #77726a;
}
.slot.cr { background: #fdf3e3; }
.slot:last-child { border-bottom: 0; }
.clip { padding: 0; border: 1px solid #111; border-bottom: 2px solid #111; background: #111; }
.clip-play { display: flex; width: 14px; padding-left: 3px; }
.clip-blue { flex: 1; height: 15px; background: #0810ec; }
.rec-o {
    width: 9px;
    height: 9px;
    background: #a8a29e;
    border: 1px solid #555;
    border-radius: 50%;
}
.stop {
    width: 9px;
    height: 9px;
    background: #a8a2a8;
    border: 1px solid #48443e;
}
.scene svg { margin-left: 1px; }
.scene b { margin-left: 38px; font-size: 10.500px; font-style: italic; }
.st {
    display: flex;
    align-items: center;
    height: 17px;
    margin-bottom: 2px;
    padding-left: 4px;
    background: #bfb9aa;
    font-size: 10.500px;
    color: #444;
}
.st-a { margin-left: 10px; }
.st-dot {
    width: 13px;
    height: 13px;
    margin-left: 9px;
    background: #0c1890;
    border-radius: 50%;
}
.st-b { margin-left: 9px; }
.mic { margin-left: 36px; }
.m-btn {
    display: flex;
    align-items: center;
    justify-content: center;
    width: 19px;
    height: 13px;
    margin-left: 59px;
    background: #f8b030;
    border: 1px solid #a84810;
}
.io {
    display: flex;
    flex-direction: column;
    height: 112px;
    margin-bottom: 2px;
    padding-left: 2px;
    background: #bfb9aa;
}
.io.end { justify-content: flex-end; padding-bottom: 2px; }
.lb {
    flex: none;
    height: 13px;
    font-size: 10px;
    line-height: 13px;
}
.lb-m { height: 12px; }
.lb-o { margin-top: 5px; }
.dd {
    position: relative;
    display: flex;
    align-items: center;
    flex: none;
    width: 89px;
    height: 13px;
    padding-left: 2px;
    background: linear-gradient(90deg, #f0f4e8, #f4f6ea 70%, #e8eee0);
    border: 1px solid #111;
    color: #45443e;
    font-size: 10px;
    white-space: nowrap;
    overflow: hidden;
}
.dd::after {
    content: "";
    position: absolute;
    right: 4px;
    top: 3px;
    border-left: 3.500px solid transparent;
    border-right: 3.500px solid transparent;
    border-top: 6px solid #111;
}
.mint { background: linear-gradient(90deg, #dff2e6, #e8f4e8 55%, #f0f4e6); }
.blue { background: linear-gradient(90deg, #e0eef0, #ecf3ee 60%, #f2f4ea); }
.plain { background: #f4f4ea; }
.gap { margin-top: 3px; margin-bottom: 1px; }
.last-dd { margin-top: 3px; }
.ch { flex: none; width: 5px; height: 9px; margin-right: 4px; }
.ch-bar { background: #111; }
.ch-dots { background: radial-gradient(circle, #333 1.100px, transparent 1.300px) 0 0 / 5px 3px; }
.ch-pts {
    background:
        linear-gradient(#3ce080, #3ce080) 0 100% / 100% 4px no-repeat,
        radial-gradient(circle, #111 1px, transparent 1.200px) 0 0 / 2.500px 2.500px;
}
.mon {
    display: flex;
    flex: none;
    height: 13px;
    gap: 3px;
}
.mb {
    width: 19px;
    height: 13px;
    background: #9c9698;
    border: 1px solid #333;
    color: #4a4644;
    font-size: 10px;
    line-height: 11px;
    text-align: center;
}
.mb:nth-child(2) { width: 26px; }
.mb.yes { background: #e6fa00; }
.mb.org { background: #fb7a1c; }
.blank {
    flex: none;
    width: 89px;
    height: 13px;
    margin-top: 3px;
    border: 1px solid #222;
}
.sel .blank { background: #fdf4e4; }
.sends {
    display: flex;
    height: 53px;
    margin-bottom: 1px;
    padding: 1px 0 0 13px;
    background: #bfb9aa;
}
.ksend {
    width: 30px;
    height: 34px;
    margin-right: 3px;
    stroke: #2b2922;
    overflow: visible;
}
.ksend text {
    fill: #222;
    stroke: none;
    font-size: 10px;
    font-weight: bold;
    text-anchor: middle;
}
.gr .ksend { stroke: #7a766a; }
.send-b { display: flex; flex-direction: column; }
.s-lb {
    height: 13px;
    margin: 2px 0 1px 1px;
    font-size: 10px;
    line-height: 13px;
}
.m-sends { flex-direction: column; padding: 1px 0 0 2px; }
.post-a, .post-b { display: flex; align-items: center; }
.post-a i { width: 14px; height: 1px; background: #9a9488; margin-right: 1px; }
.post-b i { width: 47px; height: 1px; background: #9a9488; margin-right: 1px; }
.post-a { height: 22px; }
.post-b { margin-top: 5px; }
.post {
    width: 25px;
    height: 12px;
    background: #e6fa00;
    border: 1px solid #333;
    font-size: 10px;
    line-height: 10px;
    text-align: center;
    color: #444;
}
.post-a .s-lb { margin: -7px 0 0 6px; }
.mix {
    display: flex;
    height: 120px;
    padding-top: 5px;
    background: #bfb9aa;
}
.strip {
    display: flex;
    flex-direction: column;
    align-items: center;
    flex: none;
    width: 35px;
    margin-left: 11px;
}
.pill {
    width: 35px;
    height: 12px;
    background: #eef3e6;
    border: 1px solid #333;
    border-radius: 6px;
    font-size: 10.500px;
    line-height: 10px;
    text-align: center;
    color: #444;
}
.pan-t {
    width: 0;
    height: 0;
    margin-top: 5px;
    border-left: 4.500px solid transparent;
    border-right: 4.500px solid transparent;
    border-top: 5px solid #8a8478;
}
.k {
    flex: none;
    width: 30px;
    height: 27px;
    stroke: #2b2922;
    overflow: visible;
}
.ar { stroke: #f4be64; }
.cy { stroke: #50d8e8; }
.ph { fill: none; stroke: #222; stroke-width: 1.500; }
.tnum {
    width: 23px;
    height: 23px;
    margin-top: 6px;
    background: #e6fa00;
    border: 1px solid #333;
    font-size: 12px;
    font-weight: bold;
    line-height: 21px;
    text-align: center;
}
.tnum.off { background: #fb7a1c; }
.tsolo {
    width: 23px;
    height: 12px;
    margin-top: 4px;
    background: #9c9698;
    border: 1px solid #333;
    font-size: 10px;
    line-height: 10px;
    text-align: center;
}
.tarm {
    display: flex;
    align-items: center;
    justify-content: center;
    width: 23px;
    height: 13px;
    margin-top: 5px;
    background: #9c9698;
    border: 1px solid #333;
}
.tarm i { width: 7px; height: 7px; background: #111; border-radius: 50%; }
.tarm.hot { background: #f0103c; }
.tarm.hot i { background: #500; }
.meter {
    display: flex;
    gap: 1px;
    flex: none;
    height: 112px;
    margin-left: 8px;
}
.meter i {
    position: relative;
    display: flex;
    align-items: flex-end;
    width: 5px;
    height: 112px;
    background: linear-gradient(#151010 17px, #b8b2a0 17px, #b8b2a0 18px, #151010 18px);
}
.meter u {
    width: 5px;
    background: linear-gradient(#6cf0a0, #38e480 30%, #30e070);
}
.scale {
    width: 22px;
    margin: -1px 0 0 2px;
    font-size: 10.500px;
    color: #4e4c44;
}
.scale span {
    position: relative;
    display: block;
    height: 12px;
    line-height: 12px;
    text-align: right;
}
.scale span::before {
    content: "";
    position: absolute;
    left: 0;
    top: 6px;
    width: 4px;
    height: 1px;
    background: #7a766a;
}
.scale .zero::before {
    top: 1px;
    width: 10px;
    height: 10px;
    background: #7a766a;
    clip-path: polygon(100% 0, 0 50%, 100% 100%, 100% 0, 80% 25%, 80% 75%, 25% 50%, 80% 25%);
}
.scale span:nth-child(3) { margin-top: 4px; }
.scale span:nth-child(4) { margin-top: 5px; }
.scale span:nth-child(5) { margin-top: 15px; }
.scale span:nth-child(6) { margin-top: 1px; }
.scale span:nth-child(7) { margin-top: 4px; }
.solo {
    width: 23px;
    height: 12px;
    margin-top: 17px;
    border: 1px solid #f0ecde;
    color: #f0ecde;
    font-size: 10px;
    line-height: 10px;
    text-align: center;
}
.cue { margin-top: 2px; }

.drop {
    display: flex;
    flex-direction: column;
    flex: none;
    width: 232px;
    margin: 0 1px;
}
.d-slots {
    height: 126px;
    margin-bottom: 3px;
    background: #bfb9aa;
}
.d-first { height: 18px; background: #fdf3e3; }
.d-msg {
    display: block;
    margin-top: 38px;
    font-size: 9.700px;
    line-height: 13px;
    text-align: center;
}
.d-rest { height: 307px; background: #bfb9aa; }

.side {
    display: flex;
    flex-direction: column;
    align-items: flex-start;
    width: 31px;
    padding: 49px 0 0 14px;
}
.side .t-up { margin-left: 3px; border-left-width: 4.500px; border-right-width: 4.500px; }
.side-bar {
    width: 9px;
    height: 257px;
    margin: 2px 0 14px 3px;
    background: #4c4848;
}
.side-dn { margin: 0 0 8px 3px; border-left-width: 4.500px; border-right-width: 4.500px; }
.rd {
    display: block;
    flex: none;
    width: 14px;
    height: 14px;
    margin-bottom: 5px;
    border-radius: 50%;
    font-size: 7px;
    line-height: 14px;
    text-align: center;
}
.yl { background: #f4c830; color: #8a7020; }
.dk { background: #2e2c34; }
.sr { display: flex; margin-left: -13px; }
.cut-tr {
    position: absolute;
    right: 0;
    top: 0;
    display: flex;
    flex-direction: column;
    gap: 7px;
    width: 26px;
    height: 48px;
    padding: 3px 0 0 8px;
    background: #000;
    border-bottom-left-radius: 10px;
}
.tab {
    display: flex;
    align-items: center;
    justify-content: center;
    width: 17px;
    height: 17px;
    background: #55525a;
    border-radius: 50%;
}
.tab-y { background: #8a7e40; }

/* device chain */
.devices {
    position: relative;
    display: flex;
    width: 1269px;
    height: 205px;
    margin: 3px 0 0 6px;
    padding: 11px 0 0 5px;
    background: #6b6669;
    border-radius: 8px;
}
.foot {
    width: 187px;
    height: 5px;
    margin-left: 1061px;
    background: #6b6669;
}
.dev {
    flex: none;
    height: 187px;
    background: #bdb8a8;
    border-radius: 4px;
    overflow: hidden;
}
.dots {
    flex: none;
    width: 4px;
    height: 38px;
    margin: 74px 4px 0 3px;
    background: radial-gradient(circle, #a8a294 1px, transparent 1.200px) 0 0 / 4px 4px;
}
.d-head {
    display: flex;
    align-items: center;
    height: 17px;
    padding: 0 3px 0 3px;
    background: #fdf5e4;
}
.fade { background: linear-gradient(90deg, #fdf5e4, #fdf5e4 50%, #ded8c8); }
.lav { background: #a29ec4; padding: 0 2px 0 3px; }
.pw {
    flex: none;
    width: 12px;
    height: 12px;
    background: #c8d630;
    border: 2px solid #9aa428;
    border-radius: 50%;
}
.d-name {
    margin-left: 6px;
    font-size: 11px;
    font-style: italic;
    white-space: nowrap;
}
.ico {
    display: flex;
    flex: none;
    width: 13px;
    height: 13px;
    margin-left: 3px;
    background: #35332f;
    border-radius: 50%;
}
.push { margin-left: auto; }
.stub { width: 13px; }
.stub .d-head { padding: 0; background: #d8d2c2; }
.stub .ico { margin-left: -4px; }
.stub-b { display: flex; flex-direction: column; }
.stub-b span { height: 12px; margin-top: 74px; }
.sb-o { width: 3px; height: 11px; margin-top: 5px; background: #f08a20; }
.sb-g { width: 4px; height: 13px; margin-top: 8px; background: #9c9698; border: 1px solid #333; }
.sb-y { width: 3px; height: 12px; margin-top: 5px; background: #e6fa00; }

/* velocity */
.vel { width: 164px; }
.vel-b { display: flex; }
.v1 { width: 64px; margin-left: 6px; padding-top: 6px; }
.graph { display: block; }
.gdot {
    flex: none;
    width: 9px;
    height: 9px;
    background: #96928c;
    border-radius: 50%;
}
.v1 .gdot { margin: 3px auto 0 27px; }
.lb2 {
    display: block;
    height: 11px;
    margin-top: 1px;
    font-size: 10px;
    line-height: 11px;
    text-align: center;
}
.lb-mode { margin-top: 1px; height: 13px; line-height: 13px; }
.v-dd { width: 51px; height: 12px; margin-left: 6px; font-size: 11px; }
.mode {
    display: block;
    width: 51px;
    height: 13px;
    margin: 3px 0 0 6px;
    background: #9c9698;
    border: 1px solid #444;
    color: #45423e;
    font-size: 10.500px;
    line-height: 11px;
    text-align: center;
}
.mode.lit { background: #e6fa00; margin-top: 0; }
.v2, .v3 {
    display: flex;
    flex-direction: column;
    align-items: center;
    padding-top: 4px;
}
.v2 { width: 38px; margin-left: 7px; }
.v3 { width: 44px; margin-left: 5px; }
.tx { display: block; color: #3c3a34; line-height: 12px; font-size: 10px; white-space: nowrap; }
.l1 { height: 14px; line-height: 14px; }
.l2 { height: 13px; line-height: 13px; }
.l3 { height: 12px; }
.l4 { height: 12px; }
.l5 { height: 13px; margin-top: 1px; }
.l6 { height: 10px; line-height: 10px; }
.otri {
    width: 0;
    height: 0;
    margin: 1px 0 -3px;
    border-left: 4.500px solid transparent;
    border-right: 4.500px solid transparent;
    border-top: 5px solid #f8a830;
    position: relative;
}
.o2 { margin-top: 0; margin-bottom: 0; }
.k-up { margin-top: -2px; }
.k-t { margin-top: 4px; }
.k-t2 { margin-top: 5px; }
.lb3 {
    display: block;
    height: 12px;
    font-size: 10px;
    line-height: 12px;
    white-space: nowrap;
}
.r1 { margin-top: -1px; height: 11px; line-height: 11px; }
.r2 { margin-top: 1px; }
.r3 { margin-top: -1px; }
.box {
    display: block;
    flex: none;
    width: 34px;
    height: 12px;
    background: #eef3e6;
    border: 1px solid #333;
    color: #444;
    font-size: 10.500px;
    line-height: 10px;
    text-align: center;
}
.org-box { background: #f8c030; }

/* scale device */
.minor { width: 234px; }
.min-b { display: flex; }
.matrix {
    display: grid;
    grid-template-columns: repeat(12, 11px);
    grid-auto-rows: 10px;
    gap: 2px;
    align-self: flex-start;
    margin: 9px 0 0 8px;
}
.matrix i {
    background: #bdb8a8;
    border: 1px solid #7c7870;
}
.matrix .d { background: #5c5660; border-color: #2a2824; }
.matrix .o { background: #fb8a14; border-color: #fb8a14; }
.m-right {
    display: flex;
    flex-direction: column;
    align-items: center;
    width: 38px;
    margin-left: 18px;
    padding-top: 6px;
}
.m-right .box { width: 38px; }
.mr1 { height: 12px; }
.mr2 { margin-top: -1px; }
.mr3 { height: 12px; margin-top: -2px; }
.mr4 { height: 13px; margin-top: 4px; line-height: 13px; }
.half { background: linear-gradient(90deg, #f8c838 50%, #f4f2e4 50%); margin-top: -1px; }
.fold { width: 38px; height: 12px; margin: 11px 0 0; }
.mr5 { margin: 7px -5px 0 auto; }
.mr6 { align-self: flex-start; margin-top: -4px; }
.mr7 { align-self: flex-start; margin-top: 0; }

/* operator */
.op { display: flex; width: 713px; background: #fdf5e4; }
.op-l { flex: none; width: 212px; }
.oph { padding-left: 4px; background: #fdf5e4; }
.oph .d-name { margin-left: 5px; }
.ply { margin-left: 4px; }
.o-row {
    display: grid;
    grid-template-columns: 58px 40px 33px 53px 13px;
    height: 40px;
    margin-bottom: 3px;
    padding-left: 7px;
    background: #bdb8a8;
    border-radius: 0 7px 7px 0;
}
.o-row.last { margin-top: 4px; margin-bottom: 0; }
.o-c .tx { height: 15px; line-height: 15px; }
.okn { position: relative; display: flex; }
.ks {
    flex: none;
    width: 22px;
    height: 22px;
    margin-left: -1px;
    stroke: #2b2922;
    overflow: visible;
}
.ks.off { stroke: #8c887c; }
.ov {
    margin: 12px 0 0 -7px;
    color: #3c3a34;
    font-size: 10px;
    line-height: 12px;
    white-space: nowrap;
}
.fx { margin: 6px 0 0 7px; }
.op-btn {
    display: block;
    width: 13px;
    height: 13px;
    border: 1px solid #111;
    font-size: 8px;
    line-height: 11px;
    text-align: center;
    color: #222;
    font-style: normal;
}
.o-row .op-btn { margin-top: 15px; }
.op-btn.a { background: #f8e020; }
.op-btn.b { background: #40d820; }
.op-btn.c { background: #40e0b0; }
.op-btn.d { background: #f0962a; }
.op-btn.lfo { width: 21px; background: #f8a830; }
.op-m {
    flex: none;
    width: 283px;
    height: 182px;
    margin: 3px 0 0 3px;
    background: #141410;
    border-radius: 7px;
    overflow: hidden;
}
.env { display: block; }
.op-grid {
    display: grid;
    grid-template-columns: 43px 43px 44px 47px 46px 52px;
    grid-template-rows: 13px 16px 13px 16px 14px 16px 14px;
    padding-left: 4px;
    color: #6a6a60;
    font-size: 10.500px;
    line-height: 14px;
    white-space: nowrap;
}
.op-grid > span { align-self: end; }
.g-env { grid-column: 1 / 5; border-bottom: 1px solid #444; line-height: 12px; }
.g-aux { grid-column: 5 / 7; border-bottom: 1px solid #444; margin-right: 4px; line-height: 12px; }
.atk::before {
    content: "";
    display: inline-block;
    width: 5px;
    height: 5px;
    margin-right: 2px;
    border: 1px solid #7a7a70;
}
.v { padding-left: 2px; color: #58f0c8; }
.vb { padding-left: 6px; }
.pct2 { padding-left: 6px; }
.dest { grid-column: 5 / 7; display: flex; gap: 3px; }
.dest .op-btn { font-size: 8px; }
.off-row {
    display: flex;
    align-items: center;
    justify-content: space-between;
    grid-column: 5 / 7;
    margin-right: 14px;
    color: #f0b040;
}
.mini-dn {
    display: inline-block;
    width: 0;
    height: 0;
    margin-left: 6px;
    vertical-align: middle;
    border-left: 3px solid transparent;
    border-right: 3px solid transparent;
    border-top: 3px solid #58f0c8;
}
.mini-dn.o { border-top-color: #f0b040; }
.op-btn.gl {
    align-self: end;
    width: 13px;
    height: 13px;
    background: none;
    border-color: #e09a30;
    color: #e8d890;
}
.dim-v { padding-left: 1px; color: #5c5c52; }
.op-r { flex: none; width: 212px; margin-left: 2px; }
.oph2 { justify-content: flex-end; padding-right: 3px; background: linear-gradient(90deg, #fdf5e4 60%, #ede6d4); }
.r-row {
    display: flex;
    height: 40px;
    margin-bottom: 3px;
    padding-left: 9px;
    background: #bdb8a8;
    border-radius: 7px 0 0 7px;
}
.r-row.cream { height: 46px; margin: -3px 0 0; padding-top: 4px; background: none; }
.r-row.bot { height: 41px; padding-top: 1px; }
.r-row .tx { height: 15px; line-height: 15px; }
.r1c { flex: none; width: 97px; }
.r2c { flex: none; width: 55px; }
.r3c { flex: none; width: 55px; }
.r0c { flex: none; width: 38px; }
.r4c { flex: none; width: 59px; }
.tr .tx { margin-left: -4px; }
.ctl { display: flex; }
.sq {
    flex: none;
    width: 13px;
    height: 13px;
    margin-top: 2px;
    background: #fb7a14;
    border: 1px solid #8a5020;
}
.sine { width: 33px; height: 12px; margin: 2px 0 0 3px; padding-left: 1px; }
.ell { width: 18px; height: 12px; margin: 2px 0 0 3px; padding-left: 1px; }
.lowp { width: 70px; height: 12px; margin: 2px 0 0 3px; }
.sine::after, .ell::after { right: 1px; }
.mini {
    width: 12px;
    height: 12px;
    margin: 2px 0 0 4px;
    background: #9c9698;
    border: 1px solid #333;
    font-size: 8px;
    line-height: 10px;
    text-align: center;
}
.env-ic { display: block; margin: 8px 0 3px 6px; }
.sq2 { margin: 0; }
.mini-sq { display: flex; flex-direction: column; gap: 3px; margin: 4px 0 0 12px; }
.mini-sq i { width: 6px; height: 6px; border: 1px solid #222; }
.mini-sq .d { background: #f0962a; }
.mini-sq .c { background: #40e0b0; }
.mini-sq .b { background: #40d820; }
.mini-sq .a { background: #f8e020; }
.otri2 {
    position: absolute;
    left: 0;
    top: -2px;
    width: 7px;
    height: 7px;
    background: #f0b860;
    clip-path: polygon(50% 0, 100% 100%, 0 100%);
}
.vm {
    flex: none;
    width: 11px;
    padding: 74px 0 0 3px;
}
.vm i {
    width: 5px;
    height: 41px;
    background: linear-gradient(#2a2a26 22px, #3ce080 22px);
}
.vm2 { width: 9px; }
.vm2 i { width: 2px; height: 45px; margin-left: 0; }

/* redux */
.redux { width: 87px; }
.lav .d-name { margin-left: 3px; }
.hand { margin-left: 4px; }
.rd-b { padding: 2px 0 0 6px; }
.lb4 { display: block; height: 14px; font-size: 10px; line-height: 14px; white-space: nowrap; }
.rd-row { display: flex; height: 25px; margin: 11px 0 0 2px; }
.k.wt { stroke: #f4f0e4; }
.k.wt use:last-child { stroke: #85817a; }
.rd-off { width: 20px; height: 12px; margin: 9px 0 0 20px; }
.rd-v { width: 30px; margin-left: 2px; text-align: center; }
.rd-ov { display: flex; align-items: center; gap: 6px; height: 12px; margin: 4px 0 0 4px; }
.rd-down { margin-top: 23px; }
.rd-row.rd2 .rd-hard { width: 30px; margin: 8px 0 0 11px; }
.rd-row.rd2 + .rd-v { margin-top: 1px; }

.cursor {
    position: absolute;
    left: 1153px;
    top: 64px;
}
```
